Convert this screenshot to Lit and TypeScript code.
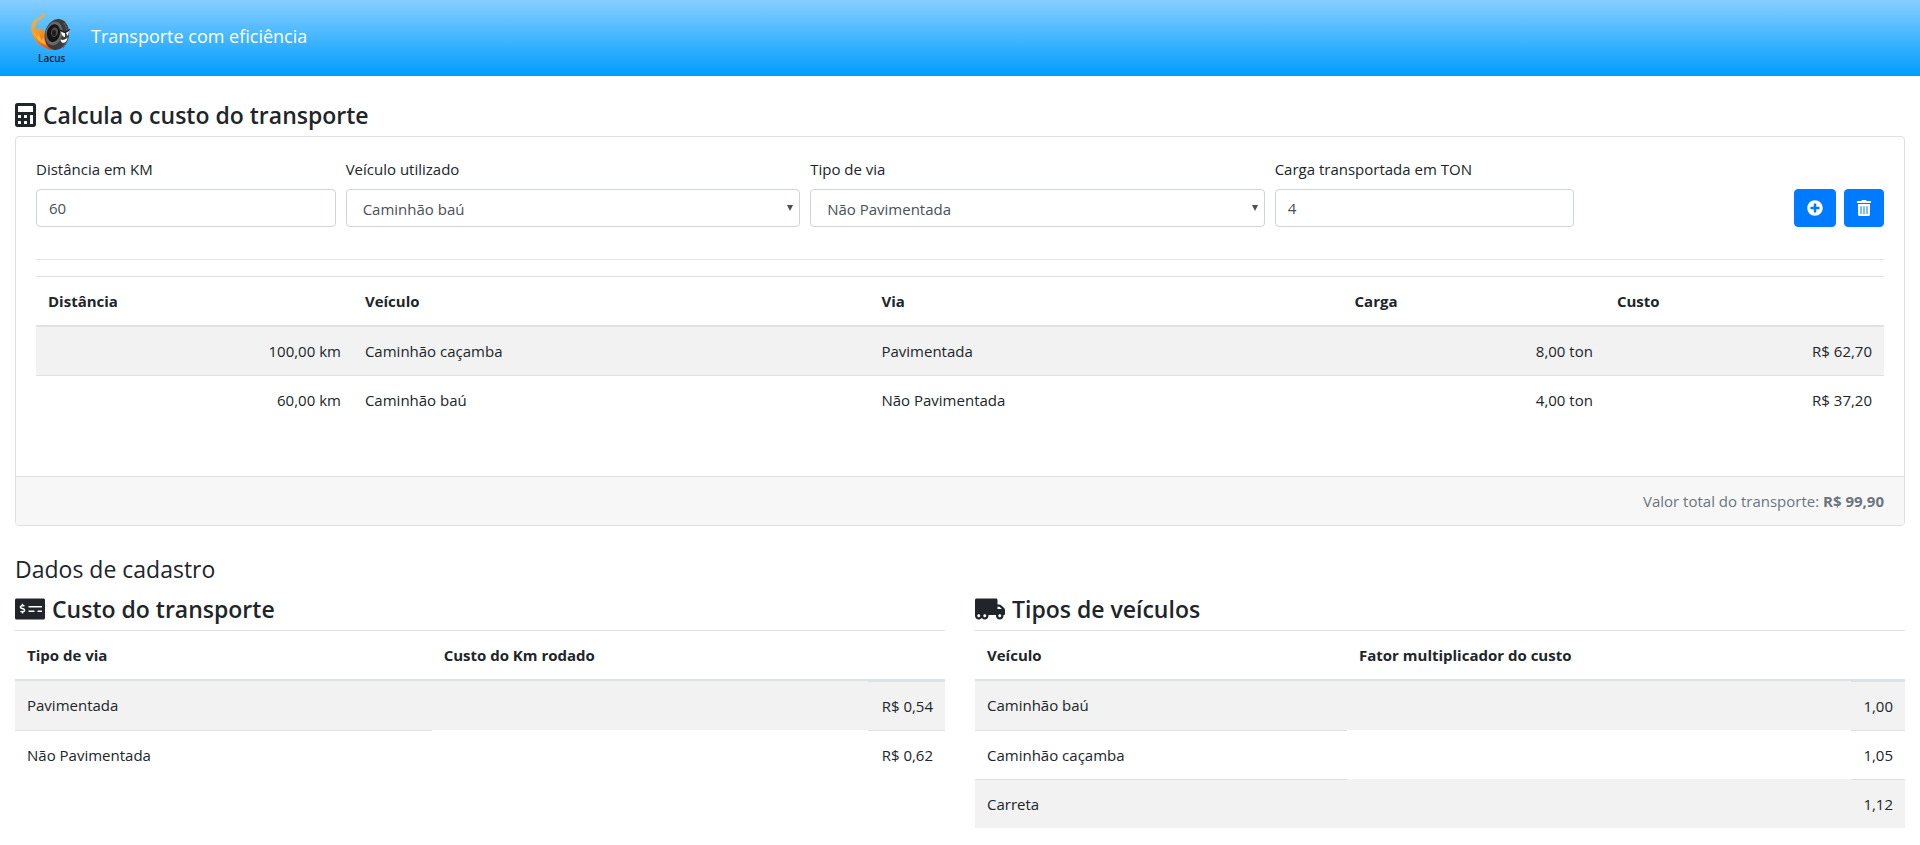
import { LitElement, html, css, svg } from "lit";
import { customElement, state } from "lit/decorators.js";

interface Transport {
  distance: number;
  vehicle: string;
  road: string;
  load: number;
  cost: number;
}

const ROADS = [
  { name: "Pavimentada", cost: 0.54 },
  { name: "Não Pavimentada", cost: 0.62 },
];

const VEHICLES = [
  { name: "Caminhão baú", factor: 1 },
  { name: "Caminhão caçamba", factor: 1.05 },
  { name: "Carreta", factor: 1.12 },
];

const FREE_LOAD = 5;
const LOAD_FEE = 0.02;

const num = (n: number) => n.toFixed(2).replace(".", ",");
const money = (n: number) => `R$ ${num(n)}`;

const icon = (cls: string, width: number, path: string) =>
  html`<svg class="icon ${cls}" viewBox="0 0 ${width} 512" aria-hidden="true">
    ${svg`<path fill="currentColor" fill-rule="evenodd" d=${path}></path>`}
  </svg>`;

const CALCULATOR =
  "M400 0H48C22 0 0 22 0 48v416c0 26 22 48 48 48h352c26 0 48-22 48-48V48c0-26-22-48-48-48zM64 64h320v128H64zM77 256h38q13 0 13 13v38q0 13-13 13H77q-13 0-13-13v-38q0-13 13-13zM205 256h38q13 0 13 13v38q0 13-13 13h-38q-13 0-13-13v-38q0-13 13-13zM333 256h38q13 0 13 13v166q0 13-13 13h-38q-13 0-13-13V269q0-13 13-13zM77 384h38q13 0 13 13v38q0 13-13 13H77q-13 0-13-13v-38q0-13 13-13zM205 384h38q13 0 13 13v38q0 13-13 13h-38q-13 0-13-13v-38q0-13 13-13z";
const MONEY_CHECK =
  "M608 32H32C14.33 32 0 46.33 0 64v384c0 17.67 14.33 32 32 32h576c17.67 0 32-14.33 32-32V64c0-17.67-14.33-32-32-32zM176 327.88V344c0 4.42-3.58 8-8 8h-16c-4.42 0-8-3.58-8-8v-16.29c-11.29-.58-22.27-4.52-31.37-11.35-3.9-2.93-4.1-8.77-.57-12.14l11.75-11.21c2.77-2.64 6.89-2.76 10.13-.73 3.87 2.42 8.26 3.72 12.82 3.72h28.11c6.5 0 11.8-5.92 11.8-13.19 0-5.95-3.61-11.19-8.77-12.73l-45-13.5c-18.59-5.58-31.58-23.42-31.58-43.39 0-24.52 19.05-44.44 42.67-45.07V152c0-4.42 3.58-8 8-8h16c4.42 0 8 3.58 8 8v16.29c11.29.58 22.27 4.51 31.37 11.35 3.9 2.93 4.1 8.77.57 12.14l-11.75 11.21c-2.77 2.64-6.89 2.76-10.13.73-3.87-2.43-8.26-3.72-12.82-3.72h-28.11c-6.5 0-11.8 5.92-11.8 13.19 0 5.95 3.61 11.19 8.77 12.73l45 13.5c18.59 5.58 31.58 23.42 31.58 43.39 0 24.53-19.05 44.44-42.67 45.07zM416 312c0 4.42-3.58 8-8 8H296c-4.42 0-8-3.58-8-8v-16c0-4.42 3.58-8 8-8h112c4.42 0 8 3.58 8 8v16zm160 0c0 4.42-3.58 8-8 8h-80c-4.42 0-8-3.58-8-8v-16c0-4.42 3.58-8 8-8h80c4.42 0 8 3.58 8 8v16zm0-96c0 4.42-3.58 8-8 8H296c-4.42 0-8-3.58-8-8v-16c0-4.42 3.58-8 8-8h272c4.42 0 8 3.58 8 8v16z";
const TRUCK =
  "M621.3 237.3l-58.5-58.5c-12-12-28.3-18.7-45.3-18.7H480V64c0-17.7-14.3-32-32-32H32C14.3 32 0 46.3 0 64v336c0 44.2 35.8 80 80 80 26.3 0 49.4-12.9 64-32.4 14.6 19.6 37.7 32.4 64 32.4 44.2 0 80-35.8 80-80 0-5.5-.6-10.8-1.6-16h163.2c-1.1 5.2-1.6 10.5-1.6 16 0 44.2 35.8 80 80 80s80-35.8 80-80c0-5.5-.6-10.8-1.6-16H624c8.8 0 16-7.2 16-16v-85.5c0-17-6.7-33.2-18.7-45.2zM80 432c-17.6 0-32-14.4-32-32s14.4-32 32-32 32 14.4 32 32-14.4 32-32 32zm128 0c-17.6 0-32-14.4-32-32s14.4-32 32-32 32 14.4 32 32-14.4 32-32 32zm272-224h37.500c4.300 0 8.300 1.700 11.300 4.700l43.300 43.300H480v-48zm48 224c-17.600 0-32-14.400-32-32s14.400-32 32-32 32 14.400 32 32-14.400 32-32 32z";
const PLUS_CIRCLE =
  "M256 8C119 8 8 119 8 256s111 248 248 248 248-111 248-248S393 8 256 8zm144 276c0 6.600-5.400 12-12 12h-92v92c0 6.600-5.400 12-12 12h-56c-6.600 0-12-5.400-12-12v-92h-92c-6.600 0-12-5.400-12-12v-56c0-6.600 5.400-12 12-12h92v-92c0-6.600 5.400-12 12-12h56c6.600 0 12 5.400 12 12v92h92c6.600 0 12 5.400 12 12v56z";
const TRASH =
  "M32 464a48 48 0 0 0 48 48h288a48 48 0 0 0 48-48V128H32zm272-256a16 16 0 0 1 32 0v224a16 16 0 0 1-32 0zm-96 0a16 16 0 0 1 32 0v224a16 16 0 0 1-32 0zm-96 0a16 16 0 0 1 32 0v224a16 16 0 0 1-32 0zM432 32H312l-9.400-18.700A24 24 0 0 0 281.100 0H166.800a23.720 23.720 0 0 0-21.400 13.300L136 32H16A16 16 0 0 0 0 48v32a16 16 0 0 0 16 16h416a16 16 0 0 0 16-16V48a16 16 0 0 0-16-16z";

@customElement("lacus-logo")
export class LacusLogo extends LitElement {
  static styles = css`
    :host { display: block; }
    svg { display: block; width: 40px; height: 52px; }
    text { font: 600 10px "Open Sans", sans-serif; }
  `;

  render() {
    return html`<svg viewBox="0 0 40 52" role="img" aria-label="Lacus">
      <defs>
        <linearGradient id="flame" x1="0.2" y1="0" x2="0.7" y2="1">
          <stop offset="0" stop-color="#f2b950" />
          <stop offset="0.5" stop-color="#f7941e" />
          <stop offset="1" stop-color="#ee4f1f" />
        </linearGradient>
      </defs>
      <path fill="url(#flame)" d="M12 1Q15 1 14 3C13 6 7 8 5 12C4 14 4 15 5 18L8 15L9 19L12 16L13 21L17 18L22 38C15 37 9 34 5 29C1 24 -1 17 1 12C3 6 13 5 12 1Z" />
      <path fill="#fbb03b" d="M2 18L6 25L7 21L11 29L12 25L15 33C9 31 4 26 2 18Z" />
      <ellipse cx="26" cy="22.500" rx="12" ry="15.500" fill="#3b3a3c" transform="rotate(12 26 22)" />
      <path d="M33 11C38 18 38 29 31 36" fill="none" stroke="#58575a" stroke-width="2" stroke-dasharray="2 1" />
      <ellipse cx="23" cy="21.500" rx="8.500" ry="12" fill="#68676a" transform="rotate(12 23 21)" />
      <ellipse cx="22.500" cy="21" rx="6.500" ry="9" fill="#151516" transform="rotate(12 22 21)" />
      <ellipse cx="23.500" cy="20" rx="3.500" ry="5" fill="#4b4a4d" transform="rotate(12 23 20)" />
      <ellipse cx="23" cy="21" rx="2" ry="3" fill="#1c1c1d" />
      <path d="M30 20L34 21L34 25Q31 25 30 20ZM35 21L38 19L37 24Z" fill="#fff" />
      <path d="M29 18L34 20.500L39 17.500" stroke="#111" stroke-width="1" fill="none" />
      <path d="M29 27Q33 29 37 25Q36 32 31 31Q29 29 29 27Z" fill="#fff" stroke="#222" stroke-width="0.500" />
      <text x="7" y="50" fill="#10202c">Lacus</text>
    </svg>`;
  }
}

@customElement("app-root")
export class AppRoot extends LitElement {
  @state() private items: Transport[] = [
    { distance: 100, vehicle: "Caminhão caçamba", road: "Pavimentada", load: 8, cost: 62.7 },
    { distance: 60, vehicle: "Caminhão baú", road: "Não Pavimentada", load: 4, cost: 37.2 },
  ];

  static styles = css`
    :host {
      display: block;
      color: #212529;
      background: #fff;
      font: 400 15px/24px "Open Sans", "Noto Sans", sans-serif;
    }
    * { box-sizing: border-box; }
    .navbar {
      display: flex;
      align-items: center;
      gap: 20px;
      height: 76px;
      padding: 0 31px;
      color: #fff;
      font-size: 18px;
      background: linear-gradient(#87ceff, #009dff);
    }
    .brand { padding-bottom: 4px; }
    .container { padding: 25px 15px; }
    h1, h2, h3 { margin: 0; font-size: 23px; line-height: 28px; }
    h1, h3 {
      display: flex;
      align-items: center;
      gap: 7px;
      padding-bottom: 7px;
      font-weight: 600;
    }
    h2 {
      margin-top: 29px;
      padding-bottom: 12px;
      font-weight: 400;
    }
    .icon { display: block; flex: none; }
    .calculator { width: 21px; height: 24px; }
    .wide { width: 30px; height: 24px; }
    .plus { width: 16px; height: 16px; }
    .trash { width: 14px; height: 16px; }
    .card { border: 1px solid #dfdfdf; border-radius: 4px; overflow: hidden; }
    .card-body { padding: 20px 20px 52px; }
    .card-footer {
      padding: 12px 20px;
      text-align: right;
      color: #6c757d;
      background: #f7f7f7;
      border-top: 1px solid #dfdfdf;
    }
    .form {
      display: grid;
      grid-template-columns: repeat(12, minmax(0, 1fr));
      column-gap: 10px;
      align-items: end;
      padding-bottom: 32px;
      border-bottom: 1px solid #e5e5e5;
      margin-bottom: 16px;
    }
    .field { display: flex; flex-direction: column; gap: 8px; }
    .col-2 { grid-column: span 2; }
    .col-3 { grid-column: span 3; }
    .control {
      width: 100%;
      height: 38px;
      margin: 0;
      padding: 6px 12px;
      color: #495057;
      font: inherit;
      background: #fff;
      border: 1px solid #ced4da;
      border-radius: 4px;
      appearance: none;
    }
    select.control {
      padding: 7px 16px 5px;
      background: #fff
        url("data:image/svg+xml,%3Csvg xmlns='http://www.w3.org/2000/svg' viewBox='0 0 6 6'%3E%3Cpath fill='%23495057' d='M0 0h6L3 6z'/%3E%3C/svg%3E")
        no-repeat right 6px center / 6px 6px;
    }
    .actions { display: flex; justify-content: flex-end; gap: 8px; }
    .btn {
      display: flex;
      align-items: center;
      height: 38px;
      margin: 0;
      padding: 0 12px;
      color: #fff;
      background: #007bff;
      border: 1px solid #007bff;
      border-radius: 4px;
      cursor: pointer;
    }
    table {
      width: 100%;
      table-layout: fixed;
      border-collapse: separate;
      border-spacing: 0;
    }
    th, td { padding: 12px; text-align: left; vertical-align: top; }
    th {
      font-weight: 700;
      border-top: 1px solid #dee2e6;
      border-bottom: 2px solid #dee2e6;
    }
    td { border-top: 1px solid #dee2e6; }
    tbody tr:nth-child(odd) { background: #f2f2f2; }
    tbody tr:first-child td { border-top: 0; }
    .number { text-align: right; white-space: nowrap; }
    .lookup td.blank { border-top: 0; }
    .lookup tbody tr:first-child td.number { border-top: 1px solid #dee2e6; }
    .w-distance { width: 17.15%; }
    .w-vehicle { width: 27.95%; }
    .w-road { width: 25.6%; }
    .w-load { width: 14.2%; }
    .w-cost { width: 15.1%; }
    .w-road-name { width: 44.8%; }
    .w-road-blank { width: 46.9%; }
    .w-type-name { width: 40%; }
    .w-type-blank { width: 54.2%; }
    .columns {
      display: grid;
      grid-template-columns: repeat(2, minmax(0, 1fr));
      gap: 30px;
      align-items: start;
    }
  `;

  private field(id: string) {
    return this.renderRoot.querySelector<HTMLInputElement | HTMLSelectElement>(`#${id}`)!.value;
  }

  private add() {
    const distance = Number(this.field("distance"));
    const load = Number(this.field("load"));
    const road = ROADS.find((r) => r.name === this.field("road"))!;
    const vehicle = VEHICLES.find((v) => v.name === this.field("vehicle"))!;
    const extra = Math.max(0, load - FREE_LOAD) * LOAD_FEE * distance;
    const cost = distance * road.cost * vehicle.factor + extra;
    this.items = [...this.items, { distance, load, road: road.name, vehicle: vehicle.name, cost }];
  }

  private clear() {
    this.items = [];
  }

  private renderForm() {
    return html`<form class="form" @submit=${(e: Event) => e.preventDefault()}>
      <div class="field col-2">
        <label for="distance">Distância em KM</label>
        <input class="control" id="distance" type="text" inputmode="decimal" value="60" />
      </div>
      <div class="field col-3">
        <label for="vehicle">Veículo utilizado</label>
        <select class="control" id="vehicle">
          ${VEHICLES.map((v) => html`<option ?selected=${v.name === "Caminhão baú"}>${v.name}</option>`)}
        </select>
      </div>
      <div class="field col-3">
        <label for="road">Tipo de via</label>
        <select class="control" id="road">
          ${ROADS.map((r) => html`<option ?selected=${r.name === "Não Pavimentada"}>${r.name}</option>`)}
        </select>
      </div>
      <div class="field col-2">
        <label for="load">Carga transportada em TON</label>
        <input class="control" id="load" type="text" inputmode="decimal" value="4" />
      </div>
      <div class="actions col-2">
        <button class="btn" type="button" aria-label="Adicionar" @click=${this.add}>
          ${icon("plus", 512, PLUS_CIRCLE)}
        </button>
        <button class="btn" type="button" aria-label="Limpar" @click=${this.clear}>
          ${icon("trash", 448, TRASH)}
        </button>
      </div>
    </form>`;
  }

  private renderItems() {
    return html`<table>
      <thead>
        <tr>
          <th class="w-distance">Distância</th>
          <th class="w-vehicle">Veículo</th>
          <th class="w-road">Via</th>
          <th class="w-load">Carga</th>
          <th class="w-cost">Custo</th>
        </tr>
      </thead>
      <tbody>
        ${this.items.map(
          (i) => html`<tr>
            <td class="number">${num(i.distance)} km</td>
            <td>${i.vehicle}</td>
            <td>${i.road}</td>
            <td class="number">${num(i.load)} ton</td>
            <td class="number">${money(i.cost)}</td>
          </tr>`
        )}
      </tbody>
    </table>`;
  }

  private renderLookup(heads: string[], widths: string[], rows: string[][]) {
    return html`<table class="lookup">
      <colgroup>
        <col class=${widths[0]} />
        <col class=${widths[1]} />
        <col />
      </colgroup>
      <thead>
        <tr>
          <th>${heads[0]}</th>
          <th colspan="2">${heads[1]}</th>
        </tr>
      </thead>
      <tbody>
        ${rows.map(
          ([name, value]) => html`<tr>
            <td>${name}</td>
            <td class="blank"></td>
            <td class="number">${value}</td>
          </tr>`
        )}
      </tbody>
    </table>`;
  }

  render() {
    const total = this.items.reduce((sum, i) => sum + i.cost, 0);
    return html`
      <header class="navbar">
        <lacus-logo></lacus-logo>
        <span class="brand">Transporte com eficiência</span>
      </header>
      <main class="container">
        <h1>${icon("calculator", 448, CALCULATOR)}Calcula o custo do transporte</h1>
        <section class="card">
          <div class="card-body">${this.renderForm()}${this.renderItems()}</div>
          <div class="card-footer">Valor total do transporte: <strong>${money(total)}</strong></div>
        </section>
        <h2>Dados de cadastro</h2>
        <div class="columns">
          <section>
            <h3>${icon("wide", 640, MONEY_CHECK)}Custo do transporte</h3>
            ${this.renderLookup(
              ["Tipo de via", "Custo do Km rodado"],
              ["w-road-name", "w-road-blank"],
              ROADS.map((r) => [r.name, money(r.cost)])
            )}
          </section>
          <section>
            <h3>${icon("wide", 640, TRUCK)}Tipos de veículos</h3>
            ${this.renderLookup(
              ["Veículo", "Fator multiplicador do custo"],
              ["w-type-name", "w-type-blank"],
              VEHICLES.map((v) => [v.name, num(v.factor)])
            )}
          </section>
        </div>
      </main>
    `;
  }
}
